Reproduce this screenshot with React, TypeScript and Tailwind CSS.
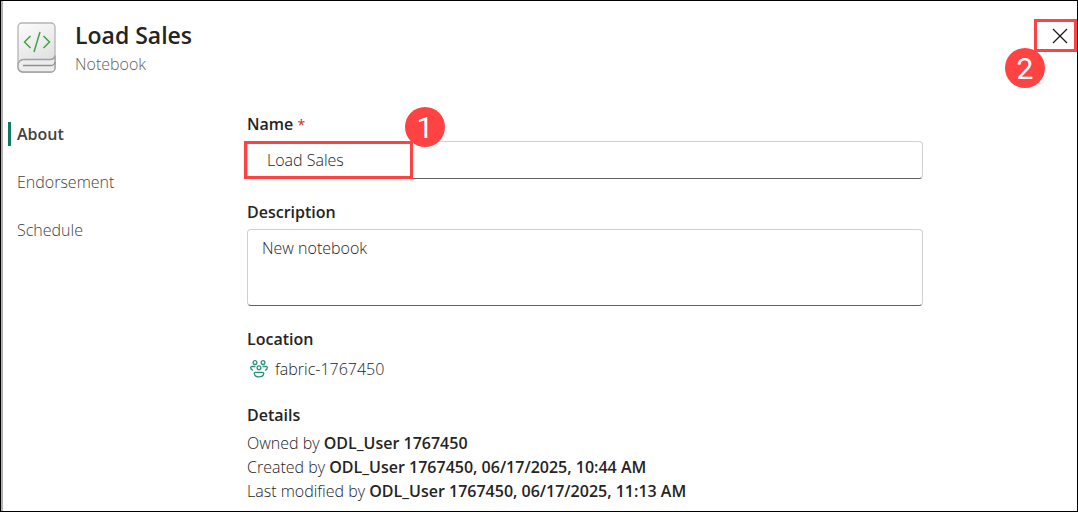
function NotebookIcon() {
  return (
    <svg width="40" height="52" viewBox="0 0 40 52" fill="none" aria-hidden="true" className="shrink-0">
      <defs>
        <linearGradient id="cover" x1="8" y1="2" x2="32" y2="50" gradientUnits="userSpaceOnUse">
          <stop stopColor="#fafafa" />
          <stop offset="1" stopColor="#dcdcdc" />
        </linearGradient>
      </defs>
      <rect x="2" y="2" width="37" height="49" rx="4" fill="url(#cover)" stroke="#b4b4b4" strokeWidth="1.300" />
      <path d="M2 44.500a5.500 5.500 0 0 1 5.500-6H34a5 5 0 0 0 5-4v12.500a4 4 0 0 1-4 4H7.500a5.500 5.500 0 0 1-5.500-6.500Z" fill="#ececec" />
      <path d="M39 34.500a5 5 0 0 1-5 4H7.500a5.500 5.500 0 0 0-5.500 6a5.500 5.500 0 0 0 5.500 6.500H35a4 4 0 0 0 4-4V34.500" stroke="#a0a0a0" strokeWidth="1.300" />
      <path d="M7 44.500h28a4 4 0 0 0 4-3.500" stroke="#909090" strokeWidth="1.300" />
      <path d="M14.500 15 8.500 21l6 6M27.500 15l6 6-6 6M24 11 18 31" stroke="#46a046" strokeWidth="1.500" />
    </svg>
  );
}

function WorkspaceIcon() {
  return (
    <svg width="18" height="18" viewBox="0 0 18 18" fill="none" stroke="#2a917b" strokeWidth="1.300" aria-hidden="true" className="shrink-0">
      <circle cx="5" cy="2.600" r="1.900" />
      <circle cx="13" cy="2.600" r="1.900" />
      <circle cx="9" cy="7.700" r="1.900" />
      <path d="M5.500 6.500H2c-.9 0-1.400.6-1.300 1.300.2 1.300.9 2.200 2.400 2.700M12.500 6.500H16c.9 0 1.400.6 1.300 1.300-.2 1.300-.9 2.200-2.400 2.700" />
      <path d="M5.700 12.300h6.600c1 0 1.500.5 1.400 1.300-.3 2-2.200 3.300-4.700 3.300s-4.400-1.300-4.700-3.300c-.1-.8.4-1.300 1.400-1.300Z" />
    </svg>
  );
}

function Marker({ value }: { value: string }) {
  return (
    <span className="flex size-10 items-center justify-center rounded-full bg-[#ff4343] pt-0.5 font-[Roboto,sans-serif] text-[30px] leading-none font-normal text-white">
      {value}
    </span>
  );
}

const details = [
  { label: "Owned by", value: "ODL_User 1767450" },
  { label: "Created by", value: "ODL_User 1767450, 06/17/2025, 10:44 AM" },
  { label: "Last modified by", value: "ODL_User 1767450, 06/17/2025, 11:13 AM" },
];

const field =
  "block w-full rounded border border-[#d1d1d1] border-b-[#616161] bg-white text-base font-light text-[#242424] outline-none";

export default function App() {
  return (
    <div className="flex min-h-screen flex-col border border-black bg-white font-['Open_Sans','Noto_Sans',sans-serif] text-base leading-6 font-light text-[#242424]">
      <div className="flex-1 border-l-2 border-[#b3b0ad] pb-1">
        <header className="flex items-start justify-between pt-[18px]">
          <div className="flex items-start gap-[19px] pl-[13px]">
            <div className="pt-[2px]">
              <NotebookIcon />
            </div>
            <div>
              <h1 className="text-[23px] leading-8 font-semibold">Load Sales</h1>
              <p className="leading-[26px] text-[#616161]">Notebook</p>
            </div>
          </div>
          <div className="relative">
            <button type="button" aria-label="Close" className="flex h-[33px] w-[43px] items-center justify-center border-3 border-[#ff4343] pl-2">
              <svg width="16" height="16" viewBox="0 0 16 16" stroke="#1b1b1b" strokeWidth="1.300" aria-hidden="true">
                <path d="m1 1 14 14M15 1 1 15" />
              </svg>
            </button>
            <div className="absolute top-[29px] -left-[29px]">
              <Marker value="2" />
            </div>
          </div>
        </header>

        <div className="flex pt-[35px]">
          <nav aria-label="Settings" className="w-[244px] shrink-0 pt-[10px] pl-[5px]">
            <ul className="flex flex-col gap-6 text-[#424242]">
              <li>
                <a href="#about" aria-current="page" className="block border-l-3 border-[#117865] pl-[6px] font-semibold">
                  About
                </a>
              </li>
              <li>
                <a href="#endorsement" className="block pl-[9px]">Endorsement</a>
              </li>
              <li>
                <a href="#schedule" className="block pl-[9px]">Schedule</a>
              </li>
            </ul>
          </nav>

          <main className="mr-[154px] min-w-0 flex-1">
            <div className="relative mb-[21px]">
              <label htmlFor="name" className="mb-[5px] block font-semibold">
                Name <span className="text-sm font-normal text-[#bc2f32]">*</span>
              </label>
              <input id="name" type="text" required defaultValue="Load Sales" className={`${field} h-[38px] px-[19px]`} />
              <div className="pointer-events-none absolute bottom-0 -left-[3px] h-[38px] w-[169px] border-3 border-[#ff4343]" />
              <div className="pointer-events-none absolute -top-[5px] left-[158px]">
                <Marker value="1" />
              </div>
            </div>
            <div className="mb-[21px]">
              <label htmlFor="description" className="mb-[5px] block font-semibold">
                Description
              </label>
              <textarea id="description" defaultValue="New notebook" className={`${field} h-[77px] resize-none px-[14px] py-[6px]`} />
            </div>
            <section className="mb-[22px]">
              <h2 className="mb-[6px] font-semibold">Location</h2>
              <p className="flex items-center gap-[7px] pl-[3px]">
                <WorkspaceIcon />
                fabric-1767450
              </p>
            </section>
            <section>
              <h2 className="mb-1 font-semibold">Details</h2>
              {details.map((item) => (
                <p key={item.label}>
                  {item.label} <strong className="font-semibold">{item.value}</strong>
                </p>
              ))}
            </section>
          </main>
        </div>
      </div>
    </div>
  );
}
